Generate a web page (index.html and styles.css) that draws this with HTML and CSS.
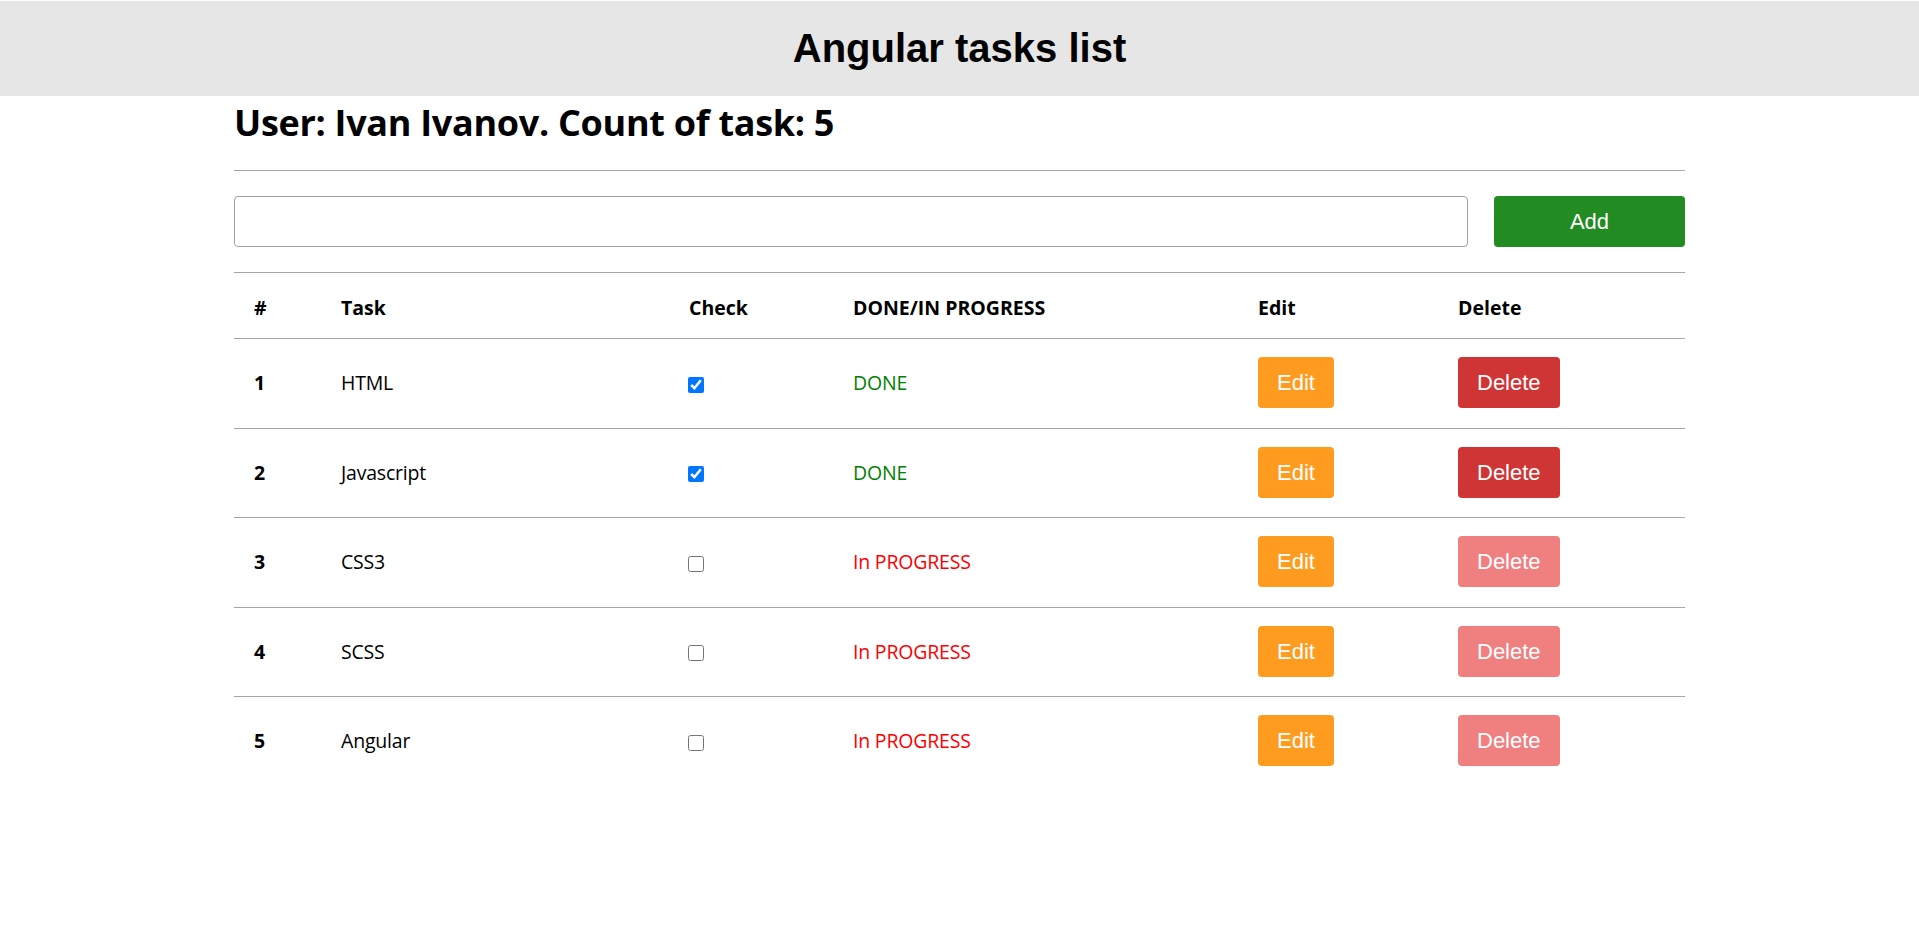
FILE: index.html
```html
<!DOCTYPE html>
<html lang="en">
<head>
<meta charset="utf-8">
<title>Angular tasks list</title>
<link rel="stylesheet" href="styles.css">
</head>
<body>
<header class="topbar">
  <h1 class="topbar-title">Angular tasks list</h1>
</header>
<main class="container">
  <h2 class="user-title">User: Ivan Ivanov. Count of task: 5</h2>
  <div class="divider"></div>
  <div class="add-row">
    <input class="task-input" type="text">
    <button class="btn btn-add">Add</button>
  </div>
  <table class="tasks">
    <thead>
      <tr>
        <th class="c-num">#</th>
        <th class="c-task">Task</th>
        <th class="c-check">Check</th>
        <th class="c-status">DONE/IN PROGRESS</th>
        <th class="c-edit">Edit</th>
        <th class="c-delete">Delete</th>
      </tr>
    </thead>
    <tbody>
      <tr>
        <td class="num">1</td>
        <td>HTML</td>
        <td><input class="check" type="checkbox" checked></td>
        <td class="done">DONE</td>
        <td><button class="btn btn-edit">Edit</button></td>
        <td><button class="btn btn-delete">Delete</button></td>
      </tr>
      <tr>
        <td class="num">2</td>
        <td>Javascript</td>
        <td><input class="check" type="checkbox" checked></td>
        <td class="done">DONE</td>
        <td><button class="btn btn-edit">Edit</button></td>
        <td><button class="btn btn-delete">Delete</button></td>
      </tr>
      <tr>
        <td class="num">3</td>
        <td>CSS3</td>
        <td><input class="check" type="checkbox"></td>
        <td class="progress">In PROGRESS</td>
        <td><button class="btn btn-edit">Edit</button></td>
        <td><button class="btn btn-delete is-disabled" disabled>Delete</button></td>
      </tr>
      <tr>
        <td class="num">4</td>
        <td>SCSS</td>
        <td><input class="check" type="checkbox"></td>
        <td class="progress">In PROGRESS</td>
        <td><button class="btn btn-edit">Edit</button></td>
        <td><button class="btn btn-delete is-disabled" disabled>Delete</button></td>
      </tr>
      <tr>
        <td class="num">5</td>
        <td>Angular</td>
        <td><input class="check" type="checkbox"></td>
        <td class="progress">In PROGRESS</td>
        <td><button class="btn btn-edit">Edit</button></td>
        <td><button class="btn btn-delete is-disabled" disabled>Delete</button></td>
      </tr>
    </tbody>
  </table>
</main>
</body>
</html>
```

FILE: styles.css
```css
html, body {
  margin: 0;
  padding: 0;
  background: #ffffff;
}

body {
  font-family: "Open Sans", "Noto Sans", sans-serif;
  font-size: 19.5px;
  color: #000;
}

.topbar {
  margin-top: 1px;
  height: 95px;
  background: #e6e6e6;
  display: flex;
  align-items: center;
  justify-content: center;
}

.topbar-title {
  margin: 0;
  font-family: "Liberation Sans", Arial, sans-serif;
  font-weight: bold;
  font-size: 40px;
  line-height: normal;
}

.container {
  width: 1451px;
  margin: 0 auto;
}

.user-title {
  margin: 2px 0 23px;
  font-size: 36px;
  letter-spacing: -0.3px;
  font-weight: bold;
  line-height: normal;
}

.divider {
  border-top: 1px solid #a6a6a6;
}

.add-row {
  display: flex;
  gap: 26px;
  padding: 25px 0 25px;
}

.task-input {
  flex: 1;
  height: 51px;
  box-sizing: border-box;
  border: 1px solid #a0a0a0;
  border-radius: 4px;
  margin: 0;
  padding: 0 8px;
  font-size: 16px;
}

.btn {
  font-family: "Liberation Sans", Arial, sans-serif;
  font-size: 22px;
  letter-spacing: 0;
  color: #fff;
  border: none;
  border-radius: 4px;
  height: 51px;
  padding: 1px 19px 0;
  margin: 0;
  cursor: pointer;
}

.btn-add {
  width: 191px;
  background: #228b22;
}

.btn-edit {
  background: #ff9c20;
}

.btn-delete {
  background: #d03536;
}

.btn-delete.is-disabled {
  background: #f08080;
  cursor: default;
}

.tasks {
  width: 100%;
  border-collapse: collapse;
  table-layout: fixed;
  border-top: 1px solid #a6a6a6;
}

.tasks th {
  text-align: left;
  font-weight: bold;
  height: 66px;
  padding: 3px 19px 0 20px;
  box-sizing: border-box;
  border-bottom: 1px solid #a6a6a6;
  vertical-align: middle;
}

.tasks td {
  padding: 18px 19px 19.5px 20px;
  vertical-align: middle;
  letter-spacing: -0.2px;
  border-bottom: 1px solid #a6a6a6;
}

.tasks tbody tr:last-child td {
  border-bottom: none;
}

.c-num { width: 87px; }
.c-task { width: 348px; }
.c-check { width: 164px; }
.c-status { width: 405px; }
.c-edit { width: 200px; }
.c-delete { width: 247px; }

.num {
  font-weight: bold;
}

.check {
  margin: 0 0 0 -1px;
  width: 16px;
  height: 16px;
  vertical-align: middle;
}

.done {
  color: #008000;
}

.progress {
  color: #ff0000;
}
```
